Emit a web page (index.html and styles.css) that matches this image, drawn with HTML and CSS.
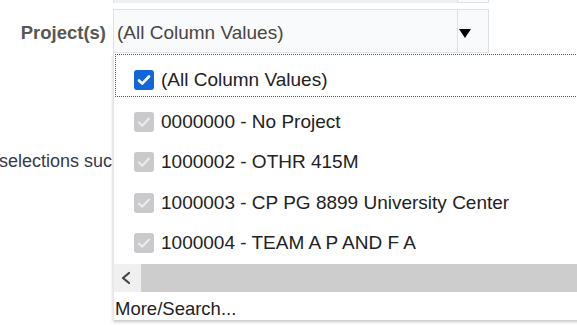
FILE: index.html
```html
<!DOCTYPE html>
<html lang="en">

<head>
    <meta charset="UTF-8">
    <meta name="viewport" content="width=device-width, initial-scale=1.0">
    <title>Project prompt</title>
    <link rel="stylesheet" href="styles.css">
</head>

<body>
    <div class="prompts">
        <div class="row row-prev">
            <div class="select select-prev">
                <div class="select-value"></div>
                <div class="select-btn"></div>
            </div>
        </div>

        <div class="row">
            <label class="label" for="project">Project(s)</label>
            <div class="field">
                <div class="select" id="project">
                    <div class="select-value">(All Column Values)</div>
                    <div class="select-btn"><span class="arrow"></span></div>
                </div>

                <div class="dropdown">
                    <ul class="options">
                        <li class="option option-focus">
                            <span class="check check-on">
                                <svg width="20" height="20" viewBox="0 0 20 20"><path d="M5 10.5l3.2 3.2L15 6.5" fill="none" stroke="#fff" stroke-width="2.6" stroke-linecap="round" stroke-linejoin="round"/></svg>
                            </span>
                            (All Column Values)
                        </li>
                        <li class="option">
                            <span class="check check-off">
                                <svg width="20" height="20" viewBox="0 0 20 20"><path d="M5 10.5l3.2 3.2L15 6.5" fill="none" stroke="#ececee" stroke-width="2" stroke-linecap="round" stroke-linejoin="round"/></svg>
                            </span>
                            0000000 - No Project
                        </li>
                        <li class="option">
                            <span class="check check-off">
                                <svg width="20" height="20" viewBox="0 0 20 20"><path d="M5 10.5l3.2 3.2L15 6.5" fill="none" stroke="#ececee" stroke-width="2" stroke-linecap="round" stroke-linejoin="round"/></svg>
                            </span>
                            1000002 - OTHR 415M
                        </li>
                        <li class="option">
                            <span class="check check-off">
                                <svg width="20" height="20" viewBox="0 0 20 20"><path d="M5 10.5l3.2 3.2L15 6.5" fill="none" stroke="#ececee" stroke-width="2" stroke-linecap="round" stroke-linejoin="round"/></svg>
                            </span>
                            1000003 - CP PG 8899 University Center
                        </li>
                        <li class="option">
                            <span class="check check-off">
                                <svg width="20" height="20" viewBox="0 0 20 20"><path d="M5 10.5l3.2 3.2L15 6.5" fill="none" stroke="#ececee" stroke-width="2" stroke-linecap="round" stroke-linejoin="round"/></svg>
                            </span>
                            1000004 - TEAM A P AND F A
                        </li>
                    </ul>

                    <div class="hscroll">
                        <div class="hscroll-btn">
                            <svg width="27" height="28" viewBox="0 0 27 28"><path d="M15 9l-6 5 6 5" fill="none" stroke="#444" stroke-width="2.2" stroke-linecap="round" stroke-linejoin="round"/></svg>
                        </div>
                        <div class="hscroll-thumb"></div>
                    </div>

                    <div class="more">More/Search...</div>
                </div>
            </div>
        </div>

        <p class="hint">selections suc</p>
    </div>
</body>

</html>
```

FILE: styles.css
```css
body {
    margin: 0;
    background: #fff;
    font-family: "Liberation Sans", Arial, sans-serif;
    overflow: hidden;
}

.prompts {
    width: 577px;
    height: 325px;
    overflow: hidden;
}

.row {
    display: flex;
    align-items: flex-start;
}

.row-prev {
    padding-left: 113px;
    margin-bottom: 6px;
}

.label {
    width: 106px;
    padding-right: 7px;
    text-align: right;
    font-weight: bold;
    font-size: 18.5px;
    line-height: 20px;
    padding-top: 14px;
    color: #5a5650;
}

.field {
    position: relative;
    z-index: 2;
}

.select {
    display: flex;
    width: 374px;
    height: 42px;
    border: 1px solid #dde1e6;
    background: #f9fafc;
}

.select-prev {
    height: 2px;
    border-top: 0;
}

.select-prev .select-value {
    background: #eef0f3;
}

.select-value {
    flex: 1;
    padding: 3px 0 0 3px;
    font-size: 19px;
    line-height: 40px;
    color: #4b4540;
}

.select-btn {
    width: 30px;
    border-left: 1px solid #dde1e6;
    position: relative;
}

.arrow {
    position: absolute;
    left: 1px;
    top: 19px;
    width: 0;
    height: 0;
    border-left: 6px solid transparent;
    border-right: 6px solid transparent;
    border-top: 9px solid #000;
}

.dropdown {
    position: absolute;
    top: 44px;
    left: 0;
    width: 480px;
    height: 267px;
    background: #fff;
    border-left: 1px solid #e3e6ea;
    box-shadow: 0 2px 3px rgba(0, 0, 0, 0.22);
}

.options {
    list-style: none;
    margin: 0;
    padding: 1px 0 0 1px;
}

.option {
    display: flex;
    align-items: center;
    gap: 7px;
    height: 40.5px;
    padding-left: 19px;
    font-size: 19px;
    color: #222;
    white-space: nowrap;
}

.option-focus {
    height: 33px;
    padding-top: 8px;
    padding-left: 18px;
    margin-bottom: 4.5px;
    border: 1px dotted #555;
    border-right: 0;
}

.check {
    display: flex;
    width: 20px;
    height: 20px;
    border-radius: 3px;
    flex-shrink: 0;
}

.check-on {
    background: #1466d8;
}

.check-off {
    background: #cacacd;
}

.hscroll {
    display: flex;
    height: 28px;
}

.hscroll-btn {
    width: 27px;
    background: #f0f0f0;
}

.hscroll-thumb {
    flex: 1;
    background: #cdcdcd;
}

.more {
    padding: 4px 0 0 1px;
    font-size: 18.5px;
    line-height: 25px;
    color: #222;
}

.hint {
    width: 113px;
    overflow: hidden;
    margin: 98px 0 0 -1px;
    font-size: 18px;
    line-height: 20px;
    color: #38384a;
    white-space: nowrap;
}
```
